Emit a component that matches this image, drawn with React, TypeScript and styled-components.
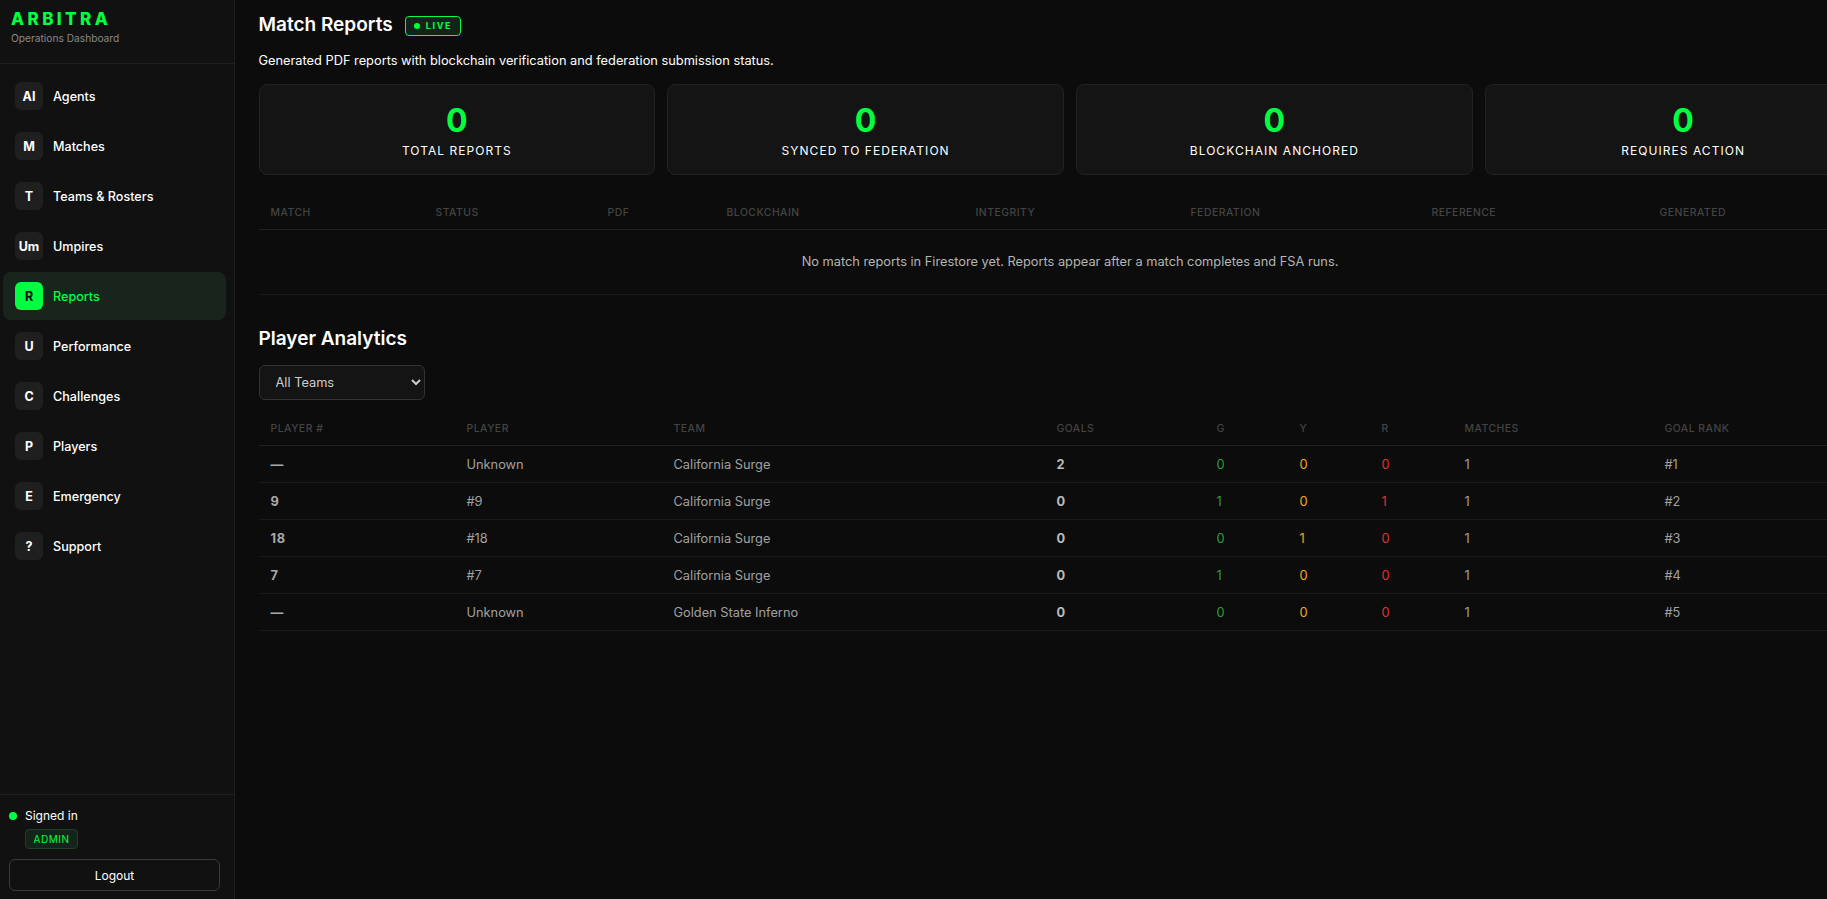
import React from 'react';
import styled, { createGlobalStyle } from 'styled-components';

const GREEN = '#00ff41';

const GlobalStyle = createGlobalStyle`
  html, body {
    margin: 0;
    height: 100%;
    overflow: hidden;
    background: #0c0c0c;
    font-family: Inter, "Liberation Sans", sans-serif;
  }
  * { box-sizing: border-box; }
`;

const Layout = styled.div`
  display: flex;
  width: 1827px;
  height: 899px;
  overflow: hidden;
`;

const Sidebar = styled.aside`
  display: flex;
  flex-direction: column;
  flex: 0 0 235px;
  background: #111;
  border-right: 1px solid #1f1f1f;
`;

const Brand = styled.div`
  height: 64px;
  padding: 8px 11px 0;
  border-bottom: 1px solid #1f1f1f;
`;

const Logo = styled.div`
  font-size: 17px;
  line-height: 22px;
  font-weight: 800;
  letter-spacing: 3.4px;
  color: ${GREEN};
`;

const Tagline = styled.div`
  margin-top: 1px;
  font-size: 10.2px;
  line-height: 14px;
  color: #888;
`;

const Nav = styled.nav`
  display: flex;
  flex-direction: column;
  flex: 1;
  gap: 2px;
  padding: 8px 8px 0 3px;
`;

const NavItem = styled.a<{ $active?: boolean }>`
  display: flex;
  align-items: center;
  gap: 10px;
  height: 48px;
  padding-left: 12px;
  border-radius: 8px;
  background: ${p => (p.$active ? '#19241c' : 'transparent')};
  color: ${p => (p.$active ? GREEN : '#fff')};
  font-size: 12.6px;
  font-weight: 450;
`;

const NavIcon = styled.span<{ $active?: boolean }>`
  display: flex;
  align-items: center;
  justify-content: center;
  width: 28px;
  height: 28px;
  border-radius: 6px;
  background: ${p => (p.$active ? GREEN : '#1f1f1f')};
  color: ${p => (p.$active ? '#0a0a0a' : '#fff')};
  font-size: 12.5px;
  font-weight: 700;
`;

const SideFooter = styled.div`
  height: 105px;
  padding: 10px 14px 0 9px;
  border-top: 1px solid #1f1f1f;
`;

const SignedRow = styled.div`
  display: flex;
  align-items: center;
  gap: 8px;
  height: 20px;
  color: #fff;
  font-size: 12px;
`;

const Dot = styled.span`
  width: 8px;
  height: 8px;
  margin-top: 2px;
  border-radius: 50%;
  background: ${GREEN};
`;

const RoleBadge = styled.div`
  display: flex;
  align-items: center;
  justify-content: center;
  width: 53px;
  height: 20px;
  margin: 4px 0 0 16px;
  border: 1px solid #1f4025;
  border-radius: 4px;
  background: #15241a;
  color: ${GREEN};
  font-size: 10px;
  letter-spacing: 0.5px;
`;

const LogoutButton = styled.button`
  display: block;
  width: 211px;
  height: 32px;
  margin-top: 10px;
  border: 1px solid #3a3a3a;
  border-radius: 6px;
  background: transparent;
  color: #fff;
  font-family: inherit;
  font-size: 12px;
  font-weight: 400;
`;

const Main = styled.main`
  flex: 0 0 1647px;
  padding: 13px 0 0 23.5px;
`;

const TitleRow = styled.div`
  display: flex;
  align-items: center;
  gap: 12px;
  height: 24px;
`;

const PageTitle = styled.h1`
  margin: 0;
  color: #fff;
  font-size: 19px;
  line-height: 24px;
  font-weight: 600;
`;

const LiveBadge = styled.span`
  display: inline-flex;
  align-items: center;
  gap: 6px;
  height: 20px;
  margin-top: 1px;
  padding: 0 8px;
  border: 1px solid ${GREEN};
  border-radius: 4px;
  background: #12241a;
  color: ${GREEN};
  font-size: 9px;
  font-weight: 700;
  letter-spacing: 1.7px;
`;

const LiveDot = styled.span`
  width: 6px;
  height: 6px;
  border-radius: 50%;
  background: ${GREEN};
`;

const Subtitle = styled.p`
  margin: 14px 0 0;
  color: #fff;
  font-size: 12.8px;
  line-height: 20px;
`;

const StatGrid = styled.div`
  display: grid;
  grid-template-columns: repeat(4, 1fr);
  gap: 12px;
  width: 1623px;
  margin-top: 13px;
`;

const StatCard = styled.div`
  display: flex;
  flex-direction: column;
  align-items: center;
  height: 91px;
  padding-top: 18px;
  border: 1px solid #222;
  border-radius: 8px;
  background: #141414;
`;

const StatValue = styled.div`
  color: ${GREEN};
  font-size: 32px;
  line-height: 36px;
  font-weight: 700;
`;

const StatLabel = styled.div`
  margin-top: 4px;
  color: #fff;
  font-size: 12px;
  line-height: 16px;
  font-weight: 400;
  letter-spacing: 1.05px;
`;

const DataTable = styled.table`
  width: 1623px;
  margin-top: 21px;
  table-layout: fixed;
  border-collapse: collapse;
`;

const Col = styled.col<{ $w: number }>`
  width: ${p => p.$w}px;
`;

const HeadCell = styled.th`
  height: 33px;
  padding: 0 12px;
  border-bottom: 1px solid #222;
  color: #444;
  font-size: 10.4px;
  font-weight: 500;
  letter-spacing: 0.5px;
  text-align: left;
  text-transform: uppercase;
`;

const EmptyCell = styled.td`
  height: 65px;
  border-bottom: 1px solid #1a1a1a;
  color: #b5b5b5;
  font-size: 12.8px;
  text-align: center;
`;

const Cell = styled.td<{ $tone?: string; $bold?: boolean; $spaced?: boolean }>`
  height: 37px;
  padding: 0 12px;
  border-bottom: 1px solid #1a1a1a;
  color: ${p => p.$tone || '#a0a0a0'};
  font-size: 12.8px;
  font-weight: ${p => (p.$bold ? 700 : 400)};
  letter-spacing: ${p => (p.$spaced ? '0.8px' : 'normal')};
`;

const SectionTitle = styled.h2`
  margin: 32px 0 0;
  color: #fff;
  font-size: 19px;
  line-height: 24px;
  font-weight: 600;
`;

const TeamSelect = styled.select`
  display: block;
  width: 166px;
  height: 35px;
  margin-top: 14px;
  padding: 0 12px;
  border: 1px solid #333;
  border-radius: 6px;
  background: #141414;
  color: #ccc;
  font-family: inherit;
  font-size: 12.8px;
`;

const PlayerTable = styled(DataTable)`
  margin-top: 13px;
`;

const navItems = [
  ['AI', 'Agents'],
  ['M', 'Matches'],
  ['T', 'Teams & Rosters'],
  ['Um', 'Umpires'],
  ['R', 'Reports'],
  ['U', 'Performance'],
  ['C', 'Challenges'],
  ['P', 'Players'],
  ['E', 'Emergency'],
  ['?', 'Support'],
];

const stats = ['Total Reports', 'Synced to Federation', 'Blockchain Anchored', 'Requires Action'];

const reportCols = [
  ['Match', 165],
  ['Status', 172],
  ['PDF', 119],
  ['Blockchain', 249],
  ['Integrity', 215],
  ['Federation', 241],
  ['Reference', 228],
  ['Generated', 234],
] as const;

const playerCols = [
  ['Player #', 196],
  ['Player', 207],
  ['Team', 383],
  ['Goals', 160],
  ['G', 83],
  ['Y', 82],
  ['R', 83],
  ['Matches', 200],
  ['Goal Rank', 229],
] as const;

const players = [
  ['—', 'Unknown', 'California Surge', 2, 0, 0, 0, 1, '#1'],
  ['9', '#9', 'California Surge', 0, 1, 0, 1, 1, '#2'],
  ['18', '#18', 'California Surge', 0, 0, 1, 0, 1, '#3'],
  ['7', '#7', 'California Surge', 0, 1, 0, 0, 1, '#4'],
  ['—', 'Unknown', 'Golden State Inferno', 0, 0, 0, 0, 1, '#5'],
];

const App: React.FC = () => (
  <Layout>
    <GlobalStyle />
    <Sidebar>
      <Brand>
        <Logo>ARBITRA</Logo>
        <Tagline>Operations Dashboard</Tagline>
      </Brand>
      <Nav>
        {navItems.map(([icon, label]) => (
          <NavItem key={label} $active={label === 'Reports'}>
            <NavIcon $active={label === 'Reports'}>{icon}</NavIcon>
            {label}
          </NavItem>
        ))}
      </Nav>
      <SideFooter>
        <SignedRow>
          <Dot />
          Signed in
        </SignedRow>
        <RoleBadge>ADMIN</RoleBadge>
        <LogoutButton>Logout</LogoutButton>
      </SideFooter>
    </Sidebar>
    <Main>
      <TitleRow>
        <PageTitle>Match Reports</PageTitle>
        <LiveBadge>
          <LiveDot />
          LIVE
        </LiveBadge>
      </TitleRow>
      <Subtitle>Generated PDF reports with blockchain verification and federation submission status.</Subtitle>
      <StatGrid>
        {stats.map(label => (
          <StatCard key={label}>
            <StatValue>0</StatValue>
            <StatLabel>{label.toUpperCase()}</StatLabel>
          </StatCard>
        ))}
      </StatGrid>
      <DataTable>
        <colgroup>
          {reportCols.map(([name, w]) => (
            <Col key={name} $w={w} />
          ))}
        </colgroup>
        <thead>
          <tr>
            {reportCols.map(([name]) => (
              <HeadCell key={name}>{name}</HeadCell>
            ))}
          </tr>
        </thead>
        <tbody>
          <tr>
            <EmptyCell colSpan={8}>
              No match reports in Firestore yet. Reports appear after a match completes and FSA runs.
            </EmptyCell>
          </tr>
        </tbody>
      </DataTable>
      <SectionTitle>Player Analytics</SectionTitle>
      <TeamSelect defaultValue="all">
        <option value="all">All Teams</option>
      </TeamSelect>
      <PlayerTable>
        <colgroup>
          {playerCols.map(([name, w]) => (
            <Col key={name} $w={w} />
          ))}
        </colgroup>
        <thead>
          <tr>
            {playerCols.map(([name]) => (
              <HeadCell key={name}>{name}</HeadCell>
            ))}
          </tr>
        </thead>
        <tbody>
          {players.map(([num, name, team, goals, g, y, r, matches, rank]) => (
            <tr key={String(rank)}>
              <Cell $bold $spaced $tone="#aaa">{num}</Cell>
              <Cell>{name}</Cell>
              <Cell>{team}</Cell>
              <Cell $bold $tone="#bbb">{goals}</Cell>
              <Cell $tone="#2e9e3e">{g}</Cell>
              <Cell $tone="#f5a623">{y}</Cell>
              <Cell $tone="#e03131">{r}</Cell>
              <Cell>{matches}</Cell>
              <Cell>{rank}</Cell>
            </tr>
          ))}
        </tbody>
      </PlayerTable>
    </Main>
  </Layout>
);

export default App;
